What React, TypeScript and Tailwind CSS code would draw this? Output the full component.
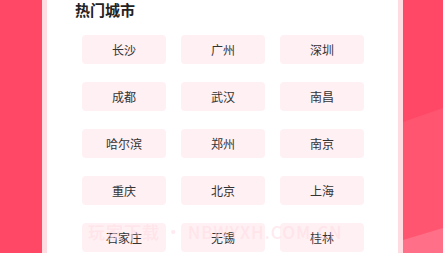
import React from "react";

const cities = [
  "长沙", "广州", "深圳",
  "成都", "武汉", "南昌",
  "哈尔滨", "郑州", "南京",
  "重庆", "北京", "上海",
  "石家庄", "无锡", "桂林",
];

export default function App() {
  return (
    <div
      className="relative h-[253px] w-[443px] overflow-hidden bg-[#ff4866]"
      style={{ fontFamily: '"Noto Sans CJK SC", "Noto Sans", sans-serif' }}
    >
      {/* background decoration */}
      <svg className="absolute inset-0" width="443" height="253" viewBox="0 0 443 253">
        <polygon points="403,122 443,108 443,253 403,253" fill="#ff5570" />
        <polygon points="403,240 443,228 443,253 403,253" fill="#ff7088" />
      </svg>

      <div className="relative ml-[42px] flex h-full w-[361px] border-x-[5px] border-[#ffdbe2] bg-white">
        <div className="flex w-full flex-col">
          <h2 className="ml-[28px] text-[15px] leading-[20px] font-bold text-[#222]">热门城市</h2>
          <div className="mt-[15px] grid grid-cols-[84px_84px_84px] justify-center gap-x-[15px] gap-y-[18px] pl-[1px]">
            {cities.map((c) => (
              <div
                key={c}
                className="flex h-[29px] items-center justify-center rounded-[4px] bg-[#fff0f3] text-[12px] text-[#333]"
              >
                {c}
              </div>
            ))}
          </div>
        </div>
        {/* watermark */}
        <div className="pointer-events-none absolute left-[41px] top-[219px] whitespace-nowrap text-[17px] font-medium tracking-[1px] text-[#ffdce5]/60">
          玩家下载 • NBWYXH.COM.CN
        </div>
      </div>
    </div>
  );
}
